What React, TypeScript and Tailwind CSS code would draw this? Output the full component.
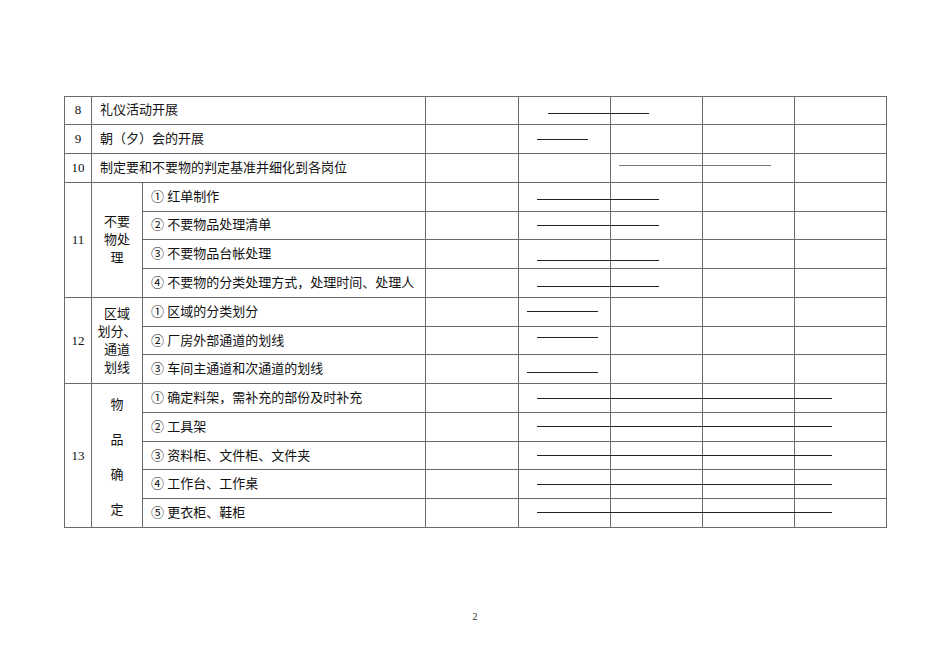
import React from "react";

const FONT = { fontFamily: '"Liberation Serif", "Noto Sans CJK SC", serif' };

type Bar = { top: number; left: number; width: number; tone?: string };

// gantt bars, measured from the table's top-left corner
const bars: Bar[] = [
  { top: 17, left: 484, width: 101 },
  { top: 43, left: 473, width: 51 },
  { top: 69, left: 555, width: 152, tone: "bg-[#777]" },
  { top: 103, left: 473, width: 122 },
  { top: 129, left: 473, width: 122 },
  { top: 164, left: 473, width: 122 },
  { top: 190, left: 473, width: 122 },
  { top: 215, left: 463, width: 71 },
  { top: 241, left: 473, width: 61 },
  { top: 276, left: 463, width: 71 },
  { top: 302, left: 473, width: 295 },
  { top: 330, left: 473, width: 295 },
  { top: 359, left: 473, width: 295 },
  { top: 388, left: 473, width: 295 },
  { top: 416, left: 473, width: 295 },
];

const td = "border border-[#6a6a6a] p-0 align-middle";
const empty = () =>
  [0, 1, 2, 3, 4].map((i) => <td key={i} className={td} />);

function Single({ no, text }: { no: string; text: string }) {
  return (
    <tr className="h-[28.77px]">
      <td className={`${td} text-center`}>{no}</td>
      <td className={`${td} pl-2`} colSpan={2}>{text}</td>
      {empty()}
    </tr>
  );
}

function Group({ no, label, items }: { no: string; label: React.ReactNode; items: string[] }) {
  return (
    <>
      {items.map((it, i) => (
        <tr key={i} className="h-[28.77px]">
          {i === 0 && (
            <>
              <td className={`${td} text-center`} rowSpan={items.length}>{no}</td>
              <td className={`${td} text-center`} rowSpan={items.length}>{label}</td>
            </>
          )}
          <td className={`${td} pl-2 whitespace-nowrap`}>{it}</td>
          {empty()}
        </tr>
      ))}
    </>
  );
}

export default function App() {
  return (
    <div className="w-[950px] h-[672px] bg-white text-[#111] flex flex-col" style={FONT}>
      <div className="pt-[95.5px] pl-[64px]">
        <div className="relative w-[822px]">
          <table className="table-fixed border-collapse w-[822px] text-[13px] leading-[18px]">
            <colgroup>
              <col className="w-[27px]" />
              <col className="w-[51px]" />
              <col className="w-[283px]" />
              <col className="w-[93px]" />
              <col className="w-[92px]" />
              <col className="w-[92px]" />
              <col className="w-[92px]" />
              <col className="w-[92px]" />
            </colgroup>
            <tbody>
              <Single no="8" text="礼仪活动开展" />
              <Single no="9" text="朝（夕）会的开展" />
              <Single no="10" text="制定要和不要物的判定基准并细化到各岗位" />
              <Group
                no="11"
                label={<>不要<br />物处<br />理</>}
                items={[
                  "① 红单制作",
                  "② 不要物品处理清单",
                  "③ 不要物品台帐处理",
                  "④ 不要物的分类处理方式，处理时间、处理人",
                ]}
              />
              <Group
                no="12"
                label={<>区域<br />划分、<br />通道<br />划线</>}
                items={["① 区域的分类划分", "② 厂房外部通道的划线", "③ 车间主通道和次通道的划线"]}
              />
              <Group
                no="13"
                label={
                  <div className="flex flex-col items-center gap-[17px] pt-[4px]">
                    <span>物</span>
                    <span>品</span>
                    <span>确</span>
                    <span>定</span>
                  </div>
                }
                items={[
                  "① 确定料架，需补充的部份及时补充",
                  "② 工具架",
                  "③ 资料柜、文件柜、文件夹",
                  "④ 工作台、工作桌",
                  "⑤ 更衣柜、鞋柜",
                ]}
              />
            </tbody>
          </table>
          {bars.map((b, i) => (
            <div
              key={i}
              className={`absolute h-px ${b.tone ?? "bg-[#222]"}`}
              style={{ top: b.top, left: b.left, width: b.width }}
            />
          ))}
        </div>
      </div>
      <div className="mt-[84px] text-center text-[10px] leading-none text-[#333]">2</div>
    </div>
  );
}
